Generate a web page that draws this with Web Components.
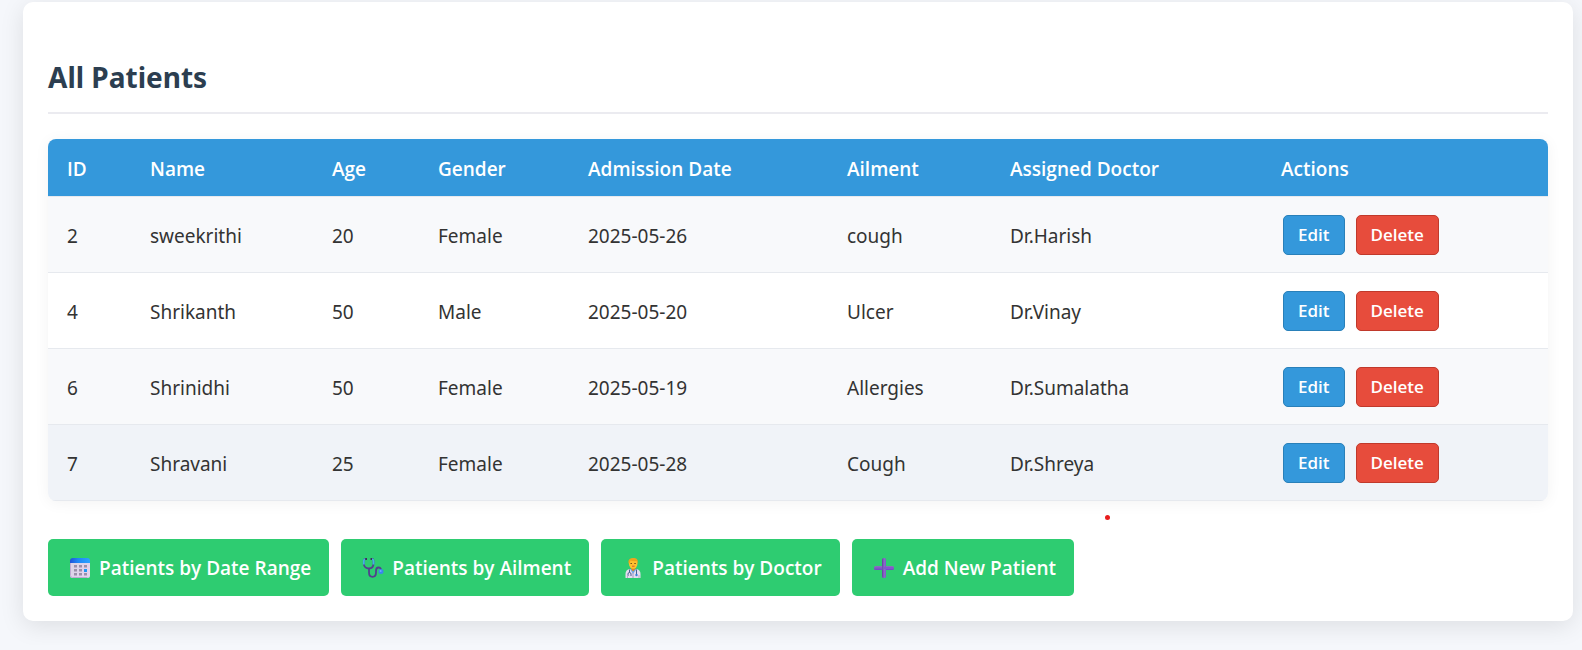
<!DOCTYPE html>
<html lang="en">
<head>
<meta charset="utf-8">
<meta name="viewport" content="width=device-width, initial-scale=1">
<title>All Patients</title>
<style>
  body {
    margin: 0;
    padding: 2px 9px 24px 23px;
    background: #f5f7fb;
    color: #333;
    font: 19px/28px "Noto Sans", "Open Sans", sans-serif;
  }
</style>
</head>
<body>
<page-card>
  <h2 slot="title">All Patients</h2>
  <patient-table></patient-table>
  <action-bar>
    <action-link href="#date-range" icon="calendar">Patients by Date Range</action-link>
    <action-link href="#ailment" icon="stethoscope">Patients by Ailment</action-link>
    <action-link href="#doctor" icon="doctor">Patients by Doctor</action-link>
    <action-link href="#new" icon="plus">Add New Patient</action-link>
  </action-bar>
</page-card>

<template id="page-card">
  <style>
    :host {
      display: block;
      padding: 56px 25px 25px;
      background: #fff;
      border-radius: 10px;
      box-shadow: 0 5px 25px rgba(0, 0, 0, .1);
    }
    ::slotted(h2) {
      margin: 0 0 25px;
      padding-bottom: 16px;
      border-bottom: 2px solid #ebebf0;
      color: #2c3e50;
      font-size: 28px;
      line-height: 38px;
      font-weight: 700;
    }
  </style>
  <slot name="title"></slot>
  <slot></slot>
</template>

<template id="patient-table">
  <style>
    :host {
      display: block;
      border-radius: 8px;
      overflow: hidden;
      box-shadow: 0 2px 15px rgba(0, 0, 0, .05);
    }
    table { width: 100%; table-layout: fixed; border-collapse: separate; border-spacing: 0; }
    th, td { box-sizing: border-box; padding: 2px 19px 0; text-align: left; border-bottom: 1px solid #e6e9ee; white-space: nowrap; }
    th { height: 58px; background: #3498db; color: #fff; font-family: "Open Sans", "Noto Sans", sans-serif; font-weight: 600; }
    td { height: 76px; }
    td:last-child { padding-top: 0; }
    tbody tr:nth-child(odd) { background: #f8f9fb; }
    tbody tr:last-child { background: #f0f3f8; }
    .actions { display: flex; gap: 11px; padding-left: 2px; }
  </style>
  <table>
    <colgroup>
      <col style="width:83px"><col style="width:182px"><col style="width:106px"><col style="width:150px"><col style="width:259px"><col style="width:163px"><col style="width:271px"><col style="width:286px">
    </colgroup>
    <thead>
      <tr><th scope="col">ID</th><th scope="col">Name</th><th scope="col">Age</th><th scope="col">Gender</th><th scope="col">Admission Date</th><th scope="col">Ailment</th><th scope="col">Assigned Doctor</th><th scope="col">Actions</th></tr>
    </thead>
    <tbody></tbody>
  </table>
</template>

<template id="row-button">
  <style>
    :host { display: block; }
    button {
      display: block;
      height: 40px;
      padding: 0 14px;
      border: 1px solid #2980b9;
      border-radius: 5px;
      background: #3498db;
      color: #fff;
      font: 600 17px/24px "Open Sans", "Noto Sans", sans-serif;
      cursor: pointer;
    }
    :host([kind="danger"]) button { background: #e74c3c; border-color: #c0392b; }
  </style>
  <button type="button"><slot></slot></button>
</template>

<template id="action-bar">
  <style>
    :host { display: flex; flex-wrap: wrap; gap: 12px; padding-top: 38px; position: relative; }
    .dot { position: absolute; left: 1057px; top: 14px; width: 5px; height: 5px; border-radius: 50%; background: #e81c1c; }
  </style>
  <slot></slot>
  <span class="dot"></span>
</template>

<template id="action-link">
  <style>
    :host { display: block; }
    a {
      display: flex;
      align-items: center;
      gap: 8px;
      height: 57px;
      padding: 0 18px 0 21px;
      border-radius: 5px;
      background: #2ecc71;
      color: #fff;
      font-family: "Open Sans", "Noto Sans", sans-serif;
      font-weight: 600;
      text-decoration: none;
      white-space: nowrap;
    }
    svg { display: block; width: 22px; height: 22px; }
  </style>
  <a><svg viewBox="0 0 22 22" aria-hidden="true"></svg><span><slot></slot></span></a>
</template>

<script>
  const stamp = (host, id) => {
    const root = host.attachShadow({ mode: "open" });
    root.append(document.getElementById(id).content.cloneNode(true));
    return root;
  };

  const ICONS = {
    calendar: `
      <defs><linearGradient id="h"><stop offset="0" stop-color="#1f52d8"/><stop offset=".4" stop-color="#1e86f5"/><stop offset="1" stop-color="#2ba3ff"/></linearGradient>
      <linearGradient id="b" x1="0" y1="0" x2="1" y2="1"><stop offset="0" stop-color="#d9d3e4"/><stop offset="1" stop-color="#e6d3f1"/></linearGradient></defs>
      <path d="M1 5H21V18.500Q21 21 18.500 21H3.500Q1 21 1 18.500Z" fill="url(#b)"/>
      <path d="M1.500 6V18.500Q1.500 20.500 3.500 20.500H18.500" fill="none" stroke="#bda9d2" stroke-width="1"/>
      <path d="M1 6V4Q1 1 4 1H19Q21 1 21 3.500V6Z" fill="url(#h)"/>
      <path d="M5 8h3v2.500H5zM10 8h3v2.500h-3zM15 8h3v2.500h-3zM5 12h3v2.500H5zM10 12h3v2.500h-3zM5 16h3v2.500H5zM10 16h3v2.500h-3zM15 16h3v2.500h-3z" fill="#9a90aa"/>
      <rect x="15" y="12" width="3" height="3" fill="#2196f3"/>`,
    stethoscope: `
      <g fill="none" stroke-linecap="round" stroke-width="1.800">
        <path d="M3.500 2Q1.800 2 1.800 4V6.500C1.800 10 4.500 11.500 6.800 11.500S11.500 10 11.500 6.500V4Q11.500 2 10 2" stroke="#533f8f"/>
        <path d="M7 12V15.500Q7 19.800 10.500 19.800T14 15.500V14Q14 10.500 16.500 10.500T18.800 13" stroke="#533f8f"/>
        <path d="M1.800 7.500V4Q1.800 2.500 3 2.200M11.500 7.500V4Q11.500 2.500 10 2.200" stroke="#43b4e5" stroke-linecap="butt"/>
      </g>
      <path d="M3.500 1H5v2H3.500zM8.500 1H10v2H8.500z" fill="#3b3450"/>
      <circle cx="19" cy="14.500" r="2.500" fill="#3b84ed"/><circle cx="18.600" cy="14" r="1" fill="#66aaff"/>`,
    doctor: `
      <path d="M3.500 21V17Q3.500 12.500 8 12H14Q18.500 12.500 18.500 17V21Z" fill="#e4ddef"/>
      <path d="M8 12L11 17L14.500 12Z" fill="#6ea7e8"/>
      <path d="M9 9H13.500V12L11 14.500L9 12Z" fill="#d88a1f"/>
      <ellipse cx="11.200" cy="6.500" rx="4.300" ry="5.200" fill="#ffc02e"/>
      <path d="M6.500 6V4Q7 1 11.500 1T15.800 5V6.500L14.500 4Q10.500 4.500 8.500 3.500L7.500 6.500Z" fill="#f0a31b"/>
      <path d="M8.500 6.500h1.500M12.300 6.500h1.500" stroke="#765019" stroke-width="1"/>
      <path d="M10 9.200h2.600" stroke="#d65b34" stroke-width="1"/>
      <path d="M7.500 12.500V15.500M6 19V17Q6 15.500 7.500 15.500T9 17V19M14.500 12.500V17.500" fill="none" stroke="#4a5f94" stroke-width="1"/>
      <path d="M11 16V21" stroke="#a39bc0" stroke-width="1"/><circle cx="14.500" cy="18" r="1.200" fill="#3980d6"/>
      <path d="M5.500 18V21M17 18V21" stroke="#b9a9cb" stroke-width="1"/>`,
    plus: `
      <defs><linearGradient id="v"><stop offset="0" stop-color="#6d4aa6"/><stop offset=".6" stop-color="#8b68c8"/><stop offset="1" stop-color="#8058c8"/></linearGradient>
      <linearGradient id="w" x2="0" y2="1"><stop offset="0" stop-color="#8d72bd"/><stop offset="1" stop-color="#7345c7"/></linearGradient></defs>
      <rect x="1" y="9" width="20" height="4" rx="1.500" fill="url(#w)"/>
      <rect x="9" y="1" width="4" height="20" rx="1.500" fill="url(#v)"/>
      <path d="M9.500 2.500V9M9.500 13V19.500" stroke="#6a48a6" stroke-width="1"/>
      <path d="M10.500 11H20" stroke="#8357cc" stroke-width="2"/>`
  };

  const PATIENTS = [
    ["2", "sweekrithi", "20", "Female", "2025-05-26", "cough", "Dr.Harish"],
    ["4", "Shrikanth", "50", "Male", "2025-05-20", "Ulcer", "Dr.Vinay"],
    ["6", "Shrinidhi", "50", "Female", "2025-05-19", "Allergies", "Dr.Sumalatha"],
    ["7", "Shravani", "25", "Female", "2025-05-28", "Cough", "Dr.Shreya"]
  ];

  customElements.define("page-card", class extends HTMLElement {
    constructor() { super(); stamp(this, "page-card"); }
  });

  customElements.define("row-button", class extends HTMLElement {
    constructor() { super(); stamp(this, "row-button"); }
  });

  customElements.define("patient-table", class extends HTMLElement {
    constructor() {
      super();
      const body = stamp(this, "patient-table").querySelector("tbody");
      body.innerHTML = PATIENTS.map(row =>
        `<tr>${row.map(v => `<td>${v}</td>`).join("")}<td><div class="actions"><row-button>Edit</row-button><row-button kind="danger">Delete</row-button></div></td></tr>`
      ).join("");
    }
  });

  customElements.define("action-bar", class extends HTMLElement {
    constructor() { super(); stamp(this, "action-bar"); }
  });

  customElements.define("action-link", class extends HTMLElement {
    constructor() {
      super();
      const root = stamp(this, "action-link");
      root.querySelector("a").href = this.getAttribute("href");
      root.querySelector("svg").innerHTML = ICONS[this.getAttribute("icon")];
    }
  });
</script>
</body>
</html>
